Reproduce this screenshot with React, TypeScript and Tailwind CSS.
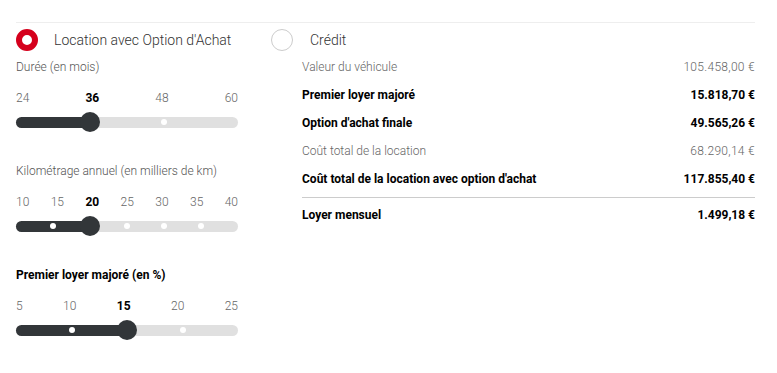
import React from "react";

interface SliderProps {
  label: string;
  boldLabel?: boolean;
  steps: number[];
  value: number;
}

function Slider({ label, boldLabel, steps, value }: SliderProps) {
  const idx = steps.indexOf(value);
  const pct = (i: number) => `${(i / (steps.length - 1)) * 100}%`;
  return (
    <div className="w-[222px]">
      <div
        className={
          boldLabel
            ? "h-4 leading-4 text-[12px] font-bold text-black"
            : "h-4 leading-4 text-[12px] font-light text-[#555]"
        }
      >
        {label}
      </div>
      {/* step labels */}
      <div className="mt-[15px] h-4 leading-4 flex justify-between text-[12px]">
        {steps.map((s) => (
          <span
            key={s}
            className={s === value ? "font-bold text-black" : "font-light text-[#666]"}
          >
            {s}
          </span>
        ))}
      </div>
      {/* track */}
      <div className="mt-[5px] h-[22px] flex items-center">
        <div className="relative w-full h-[11px] rounded-full bg-[#e0e0e0]">
          <div
            className="absolute left-0 top-0 h-full rounded-full bg-[#323639]"
            style={{ width: pct(idx) }}
          />
          {steps.map((s, i) =>
            i > 0 && i < steps.length - 1 && i !== idx ? (
              <span
                key={s}
                className="absolute top-1/2 w-[6px] h-[6px] -ml-[3px] -mt-[3px] rounded-full bg-white"
                style={{ left: pct(i) }}
              />
            ) : null
          )}
          <span
            className="absolute top-1/2 w-5 h-5 -ml-[10px] -mt-[10px] rounded-full bg-[#323639]"
            style={{ left: pct(idx) }}
          />
        </div>
      </div>
    </div>
  );
}

const rows = [
  { label: "Valeur du véhicule", value: "105.458,00 €", bold: false },
  { label: "Premier loyer majoré", value: "15.818,70 €", bold: true },
  { label: "Option d'achat finale", value: "49.565,26 €", bold: true },
  { label: "Coût total de la location", value: "68.290,14 €", bold: false },
  { label: "Coût total de la location avec option d'achat", value: "117.855,40 €", bold: true },
];

export default function App() {
  return (
    <div className="w-[777px] h-[373px] bg-white font-['Roboto',sans-serif] pt-[22px] px-4">
      <div className="w-[739px] border-t border-[#eeeeee] flex">
        {/* Left: leasing options */}
        <div className="w-[255px] pt-[6px]">
          <div className="h-[22px] flex items-center gap-4">
            <span className="w-[22px] h-[22px] rounded-full border-[6px] border-[#d5001c]" />
            <span className="text-[14px] font-light text-[#333]">Location avec Option d'Achat</span>
          </div>
          <div className="mt-2 flex flex-col gap-[30px]">
            <Slider label="Durée (en mois)" steps={[24, 36, 48, 60]} value={36} />
            <Slider
              label="Kilométrage annuel (en milliers de km)"
              steps={[10, 15, 20, 25, 30, 35, 40]}
              value={20}
            />
            <Slider label="Premier loyer majoré (en %)" boldLabel steps={[5, 10, 15, 20, 25]} value={15} />
          </div>
        </div>

        {/* Right: credit + summary */}
        <div className="flex-1 pt-[6px]">
          <div className="h-[22px] flex items-center gap-[17px]">
            <span className="w-[22px] h-[22px] rounded-full border border-[#cccccc]" />
            <span className="text-[14px] font-light text-[#333]">Crédit</span>
          </div>
          <div className="ml-[31px] mt-[2px] text-[12px]">
            {rows.map((r) => (
              <div
                key={r.label}
                className={
                  r.bold
                    ? "h-7 flex items-center justify-between font-bold text-black"
                    : "h-7 flex items-center justify-between font-light text-[#666]"
                }
              >
                <span>{r.label}</span>
                <span className={r.bold ? "" : "tracking-[0.3px]"}>{r.value}</span>
              </div>
            ))}
            <div className="mt-1 h-px bg-[#cccccc]" />
            <div className="mt-[3px] h-7 flex items-center justify-between font-bold text-black">
              <span>Loyer mensuel</span>
              <span>1.499,18 €</span>
            </div>
          </div>
        </div>
      </div>
    </div>
  );
}
